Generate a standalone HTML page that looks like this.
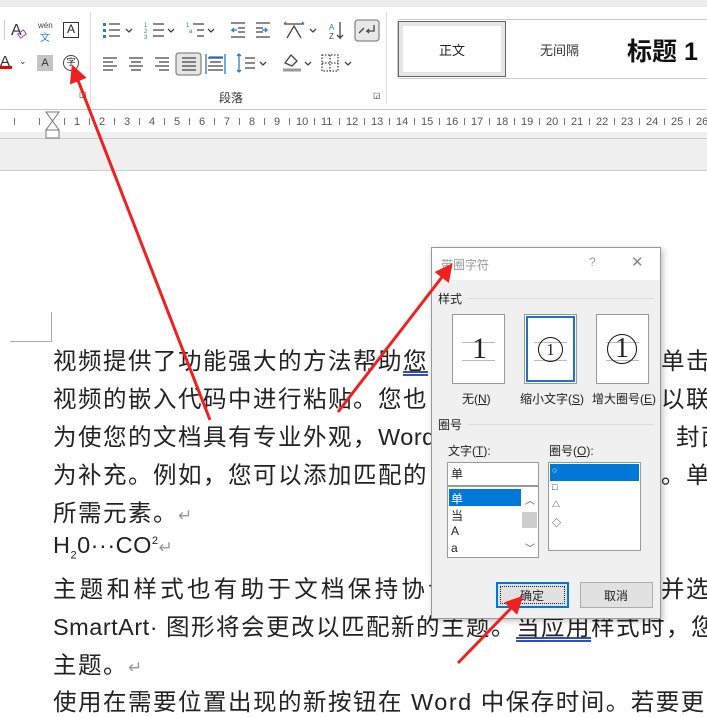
<!DOCTYPE html>
<html><head><meta charset="utf-8"><style>
*{margin:0;padding:0;box-sizing:border-box}
body{width:707px;height:690px;overflow:hidden;background:#fff;position:relative;font-family:"Liberation Sans","Noto Sans CJK SC",sans-serif;color:#222}
.abs{position:absolute}
.ic{position:absolute;font-size:12px;color:#333}
.line{position:absolute;left:53px;font-size:23.5px;white-space:nowrap;color:#222;letter-spacing:1.5px}
.rn{position:absolute;top:116px;font-size:11px;color:#555}
.rt{position:absolute;top:118px;width:1px;height:7px;background:#777}
.dl{position:absolute;font-size:12px;color:#222;white-space:nowrap}
</style></head><body>
<div class="abs" style="left:0;top:0;width:707px;height:7px;background:#ececec"></div>
<div class="abs" style="left:0;top:7px;width:707px;height:102px;background:#fff;box-shadow:0 2px 3px #bbb"></div>
<div class="abs" style="left:90px;top:12px;width:1px;height:92px;background:#ddd"></div>
<div class="abs" style="left:386px;top:12px;width:1px;height:92px;background:#ddd"></div>
<div class="abs" style="left:4px;top:20px;width:1px;height:20px;background:#ccc"></div>
<div class="ic" style="left:11px;top:22px;font-size:16px">A</div><div class="abs" style="left:18px;top:31px;width:8px;height:6px;border:1.5px solid #a040c0;transform:rotate(-35deg)"></div>
<div class="ic" style="left:38px;top:21px;font-size:8px;color:#444">wén</div><div class="ic" style="left:40px;top:29px;font-size:10px;color:#2a8ad4">文</div>
<div class="abs" style="left:63px;top:22px;width:16px;height:16px;border:1.5px solid #333;font-size:12px;text-align:center;line-height:13px">A</div>
<div class="ic" style="left:0;top:53px;font-size:15px">A</div><div class="abs" style="left:0;top:66px;width:12px;height:3px;background:#e00"></div>
<div class="ic" style="left:19px;top:56px;font-size:9px">⌄</div>
<div class="abs" style="left:37px;top:55px;width:16px;height:16px;background:#c4c4c4;font-size:11px;text-align:center;line-height:16px;color:#333">A</div>
<div class="abs" style="left:63px;top:55px;width:16px;height:16px;border:1.3px solid #444;border-radius:50%;font-size:9px;text-align:center;line-height:13px">字</div>
<div class="ic" style="left:79px;top:90px;font-size:8px">◲</div>
<svg class="abs" style="left:100px;top:18px" width="285" height="60" stroke="#444" stroke-width="1.3" fill="none">
<g fill="#2a7ad4" stroke="none"><rect x="3" y="5" width="3" height="3"/><rect x="3" y="11" width="3" height="3"/><rect x="3" y="17" width="3" height="3"/></g>
<path d="M9 6h11M9 12h11M9 18h11"/><path d="M26 11l3 3 3-3"/>
<path d="M53 6h11M53 12h11M53 18h11"/><text x="44" y="9" font-size="6" fill="#2a7ad4" stroke="none">1</text><text x="44" y="15" font-size="6" fill="#2a7ad4" stroke="none">2</text><text x="44" y="21" font-size="6" fill="#2a7ad4" stroke="none">3</text><path d="M68 11l3 3 3-3"/>
<path d="M93 6h11M97 12h7M97 18h7"/><text x="86" y="9" font-size="6" fill="#2a7ad4" stroke="none">1</text><text x="89" y="15" font-size="6" fill="#2a7ad4" stroke="none">a</text><path d="M108 11l3 3 3-3"/>
<path d="M131 5h14M138 10h7M138 14h7M131 19h14" /><path d="M137 12h-5l2-2M132 12l2 2" stroke="#2a7ad4"/>
<path d="M156 5h14M156 10h7M156 14h7M156 19h14"/><path d="M162 12h5l-2-2M167 12l-2 2" stroke="#2a7ad4"/>
<path d="M187 20l7-12 7 12M184 6h20" /><path d="M184 6l2-2M204 6l-2-2" stroke="#2a7ad4"/><path d="M210 11l3 3 3-3"/>
<text x="229" y="12" font-size="8" fill="#2a7ad4" stroke="none">A</text><text x="229" y="21" font-size="8" fill="#444" stroke="none">Z</text><path d="M240 4v16l-3-3M240 20l3-3"/>
<rect x="255" y="2" width="24" height="21" rx="3" fill="#e8e8e8" stroke="#888"/><path d="M274 7v6h-7l2-2M267 13l2 2M259 15l5-5"/>
<path d="M3 40h14M3 44h10M3 48h14M3 52h10"/>
<path d="M29 40h14M31 44h10M29 48h14M31 52h10"/>
<path d="M55 40h14M59 44h10M55 48h14M59 52h10"/>
<rect x="76" y="35" width="25" height="22" rx="3" fill="#e6e6e6" stroke="#888"/><path d="M82 40h14M82 44h14M82 48h14M82 52h14"/>
<path d="M106 36v20M125 36v20" stroke="#2a7ad4"/><path d="M108 40h15M110 44h11M108 48h15M108 52h15"/><path d="M109 39h14" stroke="#2a7ad4"/>
<path d="M139 36v18M137 38l2-2 2 2M137 52l2 2 2-2" stroke="#2a7ad4"/><path d="M145 40h10M145 45h10M145 50h10"/><path d="M160 44l3 3 3-3"/>
<path d="M183 52h18" stroke="#999" stroke-width="3"/><path d="M185 45l6-8 6 6-5 5z"/><path d="M205 44l3 3 3-3"/>
<rect x="222" y="37" width="16" height="16" stroke-dasharray="1.5 1.5"/><path d="M230 37v16M222 45h16" stroke-dasharray="1.5 1.5"/><path d="M245 44l3 3 3-3"/>
</svg>
<div class="abs" style="left:219px;top:89px;font-size:12px;color:#333">段落</div>
<div class="ic" style="left:373px;top:91px;font-size:8px">◲</div>
<div class="abs" style="left:397px;top:19px;width:320px;height:60px;border:1px solid #ccc;border-radius:3px"></div>
<div class="abs" style="left:398px;top:21px;width:108px;height:56px;border:1px solid #666;background:#fff;outline:4px solid #e6e6e6;outline-offset:-5px"></div>
<div class="abs" style="left:439px;top:40px;font-size:13px;color:#222">正文</div>
<div class="abs" style="left:540px;top:40px;font-size:13px;color:#333">无间隔</div>
<div class="abs" style="left:627px;top:32px;font-size:25px;font-weight:bold;color:#111">标题 1</div>
<div class="abs" style="left:0;top:110px;width:707px;height:22px;background:#fff"></div>
<div class="abs" style="left:0;top:132px;width:707px;height:6px;background:#f0f0f0"></div>
<div class="abs" style="left:0;top:138px;width:707px;height:1px;background:#ccc"></div>
<div class="abs" style="left:0;top:139px;width:707px;height:31px;background:#efefef"></div>
<div class="abs" style="left:0;top:170px;width:707px;height:1px;background:#ccc"></div>
<div id="ruler"></div>
<svg class="abs" style="left:45px;top:111px" width="16" height="28" fill="#fff" stroke="#777"><path d="M1 1h13l-6.5 9z M1 19h13l-6.5-9z"/><rect x="1" y="19" width="13" height="8"/></svg>
<div class="abs" style="left:51px;top:312px;width:1px;height:29px;background:#aaa"></div>
<div class="abs" style="left:10px;top:341px;width:42px;height:1px;background:#aaa"></div>
<div class="line" style="top:342px">视频提供了功能强大的方法帮助<span style="text-decoration:underline double #3050c0">您</span></div>
<div class="line" style="top:380px">视频的嵌入代码中进行粘贴。您也</div>
<div class="line" style="top:418px">为使您的文档具有专业外观，<span style="letter-spacing:0.5px">Word</span></div>
<div class="line" style="top:456px">为补充。例如，您可以添加匹配的</div>
<div class="line" style="top:494px">所需元素。<span style="color:#999;font-size:17px">↵</span></div>
<div class="line" style="top:532px;letter-spacing:0.5px">H<sub style="font-size:11px">2</sub>0···CO<sup style="font-size:11px">2</sup><span style="color:#999;font-size:17px">↵</span></div>
<div class="line" style="top:570px;letter-spacing:3.3px">主题和样式也有助于文档保持协调。当您</div>
<div class="line" style="top:608px"><span style="letter-spacing:0.5px">SmartArt·</span> 图形将会更改以匹配新的主题。<span style="text-decoration:underline double #3050c0">当应用</span>样式时，您</div>
<div class="line" style="top:646px">主题。<span style="color:#999;font-size:17px">↵</span></div>
<div class="line" style="top:683px">使用在需要位置出现的新按钮在 Word 中保存时间。若要更</div>
<div class="line" style="top:342px;left:661px">单击联</div>
<div class="line" style="top:380px;left:661px">以联</div>
<div class="line" style="top:418px;left:676px">封面</div>
<div class="line" style="top:456px;left:661px">。单</div>
<div class="line" style="top:570px;left:661px">并选</div>
<div class="abs" style="left:431px;top:247px;width:230px;height:372px;background:#f0f0f0;border:1px solid #999;box-shadow:2px 2px 6px rgba(0,0,0,.25)">
 <div class="abs" style="left:0;top:0;width:228px;height:32px;background:#fff"></div>
 <div class="dl" style="left:9px;top:8px;color:#999">带圈字符</div>
 <div class="dl" style="left:157px;top:7px;color:#999">?</div>
 <div class="dl" style="left:199px;top:5px;color:#888;font-size:15px">✕</div>
 <div class="dl" style="left:6px;top:42px">样式</div><div class="abs" style="left:36px;top:50px;width:186px;height:1px;background:#ddd"></div>
 <div class="abs" style="left:20px;top:66px;width:53px;height:70px;background:#fff;border:1px solid #999"></div>
 <div class="abs" style="left:92px;top:66px;width:53px;height:70px;background:#fff;border:1px solid #999;outline:2px solid #1a73d0;outline-offset:-4px"></div>
 <div class="abs" style="left:164px;top:66px;width:53px;height:70px;background:#fff;border:1px solid #999"></div>
 <div class="abs" style="left:30px;top:94px;width:33px;height:1px;background:#bbb"></div><div class="abs" style="left:30px;top:112px;width:33px;height:1px;background:#bbb"></div>
 <div class="abs" style="left:102px;top:94px;width:33px;height:1px;background:#bbb"></div><div class="abs" style="left:102px;top:112px;width:33px;height:1px;background:#bbb"></div>
 <div class="abs" style="left:174px;top:94px;width:33px;height:1px;background:#bbb"></div><div class="abs" style="left:174px;top:112px;width:33px;height:1px;background:#bbb"></div>
 <div class="dl" style="left:40px;top:84px;font-size:30px;font-family:'Liberation Serif',serif">1</div>
 <div class="abs" style="left:106px;top:89px;width:25px;height:25px;border:1.3px solid #111;border-radius:50%;font-size:17px;text-align:center;line-height:23px;font-family:'Liberation Serif',serif">1</div>
 <div class="abs" style="left:175px;top:86px;width:30px;height:30px;border:1.3px solid #111;border-radius:50%;font-size:28px;text-align:center;line-height:28px;font-family:'Liberation Serif',serif">1</div>
 <div class="dl" style="left:30px;top:142px">无(<u>N</u>)</div>
 <div class="dl" style="left:88px;top:142px">缩小文字(<u>S</u>)</div>
 <div class="dl" style="left:160px;top:142px">增大圈号(<u>E</u>)</div>
 <div class="dl" style="left:6px;top:168px">圈号</div><div class="abs" style="left:36px;top:176px;width:186px;height:1px;background:#ddd"></div>
 <div class="dl" style="left:16px;top:194px">文字(<u>T</u>):</div>
 <div class="dl" style="left:117px;top:194px">圈号(<u>O</u>):</div>
 <div class="abs" style="left:15px;top:214px;width:92px;height:24px;background:#fff;border:1px solid #999"></div>
 <div class="dl" style="left:19px;top:217px">单</div>
 <div class="abs" style="left:15px;top:238px;width:92px;height:72px;background:#fff;border:1px solid #999"></div>
 <div class="abs" style="left:17px;top:241px;width:72px;height:17px;background:#0078d7"></div>
 <div class="dl" style="left:19px;top:242px;color:#fff">单</div>
 <div class="dl" style="left:19px;top:259px">当</div>
 <div class="dl" style="left:19px;top:276px">A</div>
 <div class="dl" style="left:19px;top:293px">a</div>
 <div class="abs" style="left:90px;top:264px;width:15px;height:16px;background:#cdcdcd"></div>
 <div class="dl" style="left:93px;top:244px;font-size:10px;color:#555">︿</div>
 <div class="dl" style="left:93px;top:292px;font-size:10px;color:#555">﹀</div>
 <div class="abs" style="left:116px;top:214px;width:93px;height:89px;background:#fff;border:1px solid #999"></div>
 <div class="abs" style="left:118px;top:216px;width:89px;height:17px;background:#0078d7"></div>
 <div class="dl" style="left:120px;top:217px;color:#fff;font-size:9px">○</div>
 <div class="dl" style="left:120px;top:234px;font-size:9px">□</div>
 <div class="dl" style="left:120px;top:251px;font-size:8px">△</div>
 <div class="dl" style="left:120px;top:268px;font-size:9px">◇</div>
 <div class="abs" style="left:64px;top:334px;width:73px;height:26px;background:#e1e1e1;border:2px solid #0078d7;outline:1px dotted #222;outline-offset:-5px"></div>
 <div class="dl" style="left:88px;top:339px">确定</div>
 <div class="abs" style="left:148px;top:334px;width:73px;height:26px;background:#e1e1e1;border:1px solid #adadad"></div>
 <div class="dl" style="left:172px;top:339px">取消</div>
</div>
<svg class="abs" style="left:0;top:0" width="707" height="690">
<defs><marker id="h" markerWidth="6" markerHeight="6" refX="4" refY="3" orient="auto"><path d="M0 0L6 3L0 6z" fill="#f02020"/></marker></defs>
<g stroke="#f02020" stroke-width="3" fill="none" marker-end="url(#h)">
<path d="M210 420L74 70"/><path d="M338 412L449 268"/><path d="M458 663L519 600"/>
</g></svg>
<script>
var r=document.getElementById('ruler'),h='';
for(var n=-2;n<=26;n++){var x=52+25*n;
 if(n>0)h+='<div class="rn" style="left:'+(x-(n>9?6:3))+'px">'+n+'</div>';
 h+='<div class="rt" style="left:'+(x+12)+'px"></div>';}
r.innerHTML=h;
</script>
</body></html>
